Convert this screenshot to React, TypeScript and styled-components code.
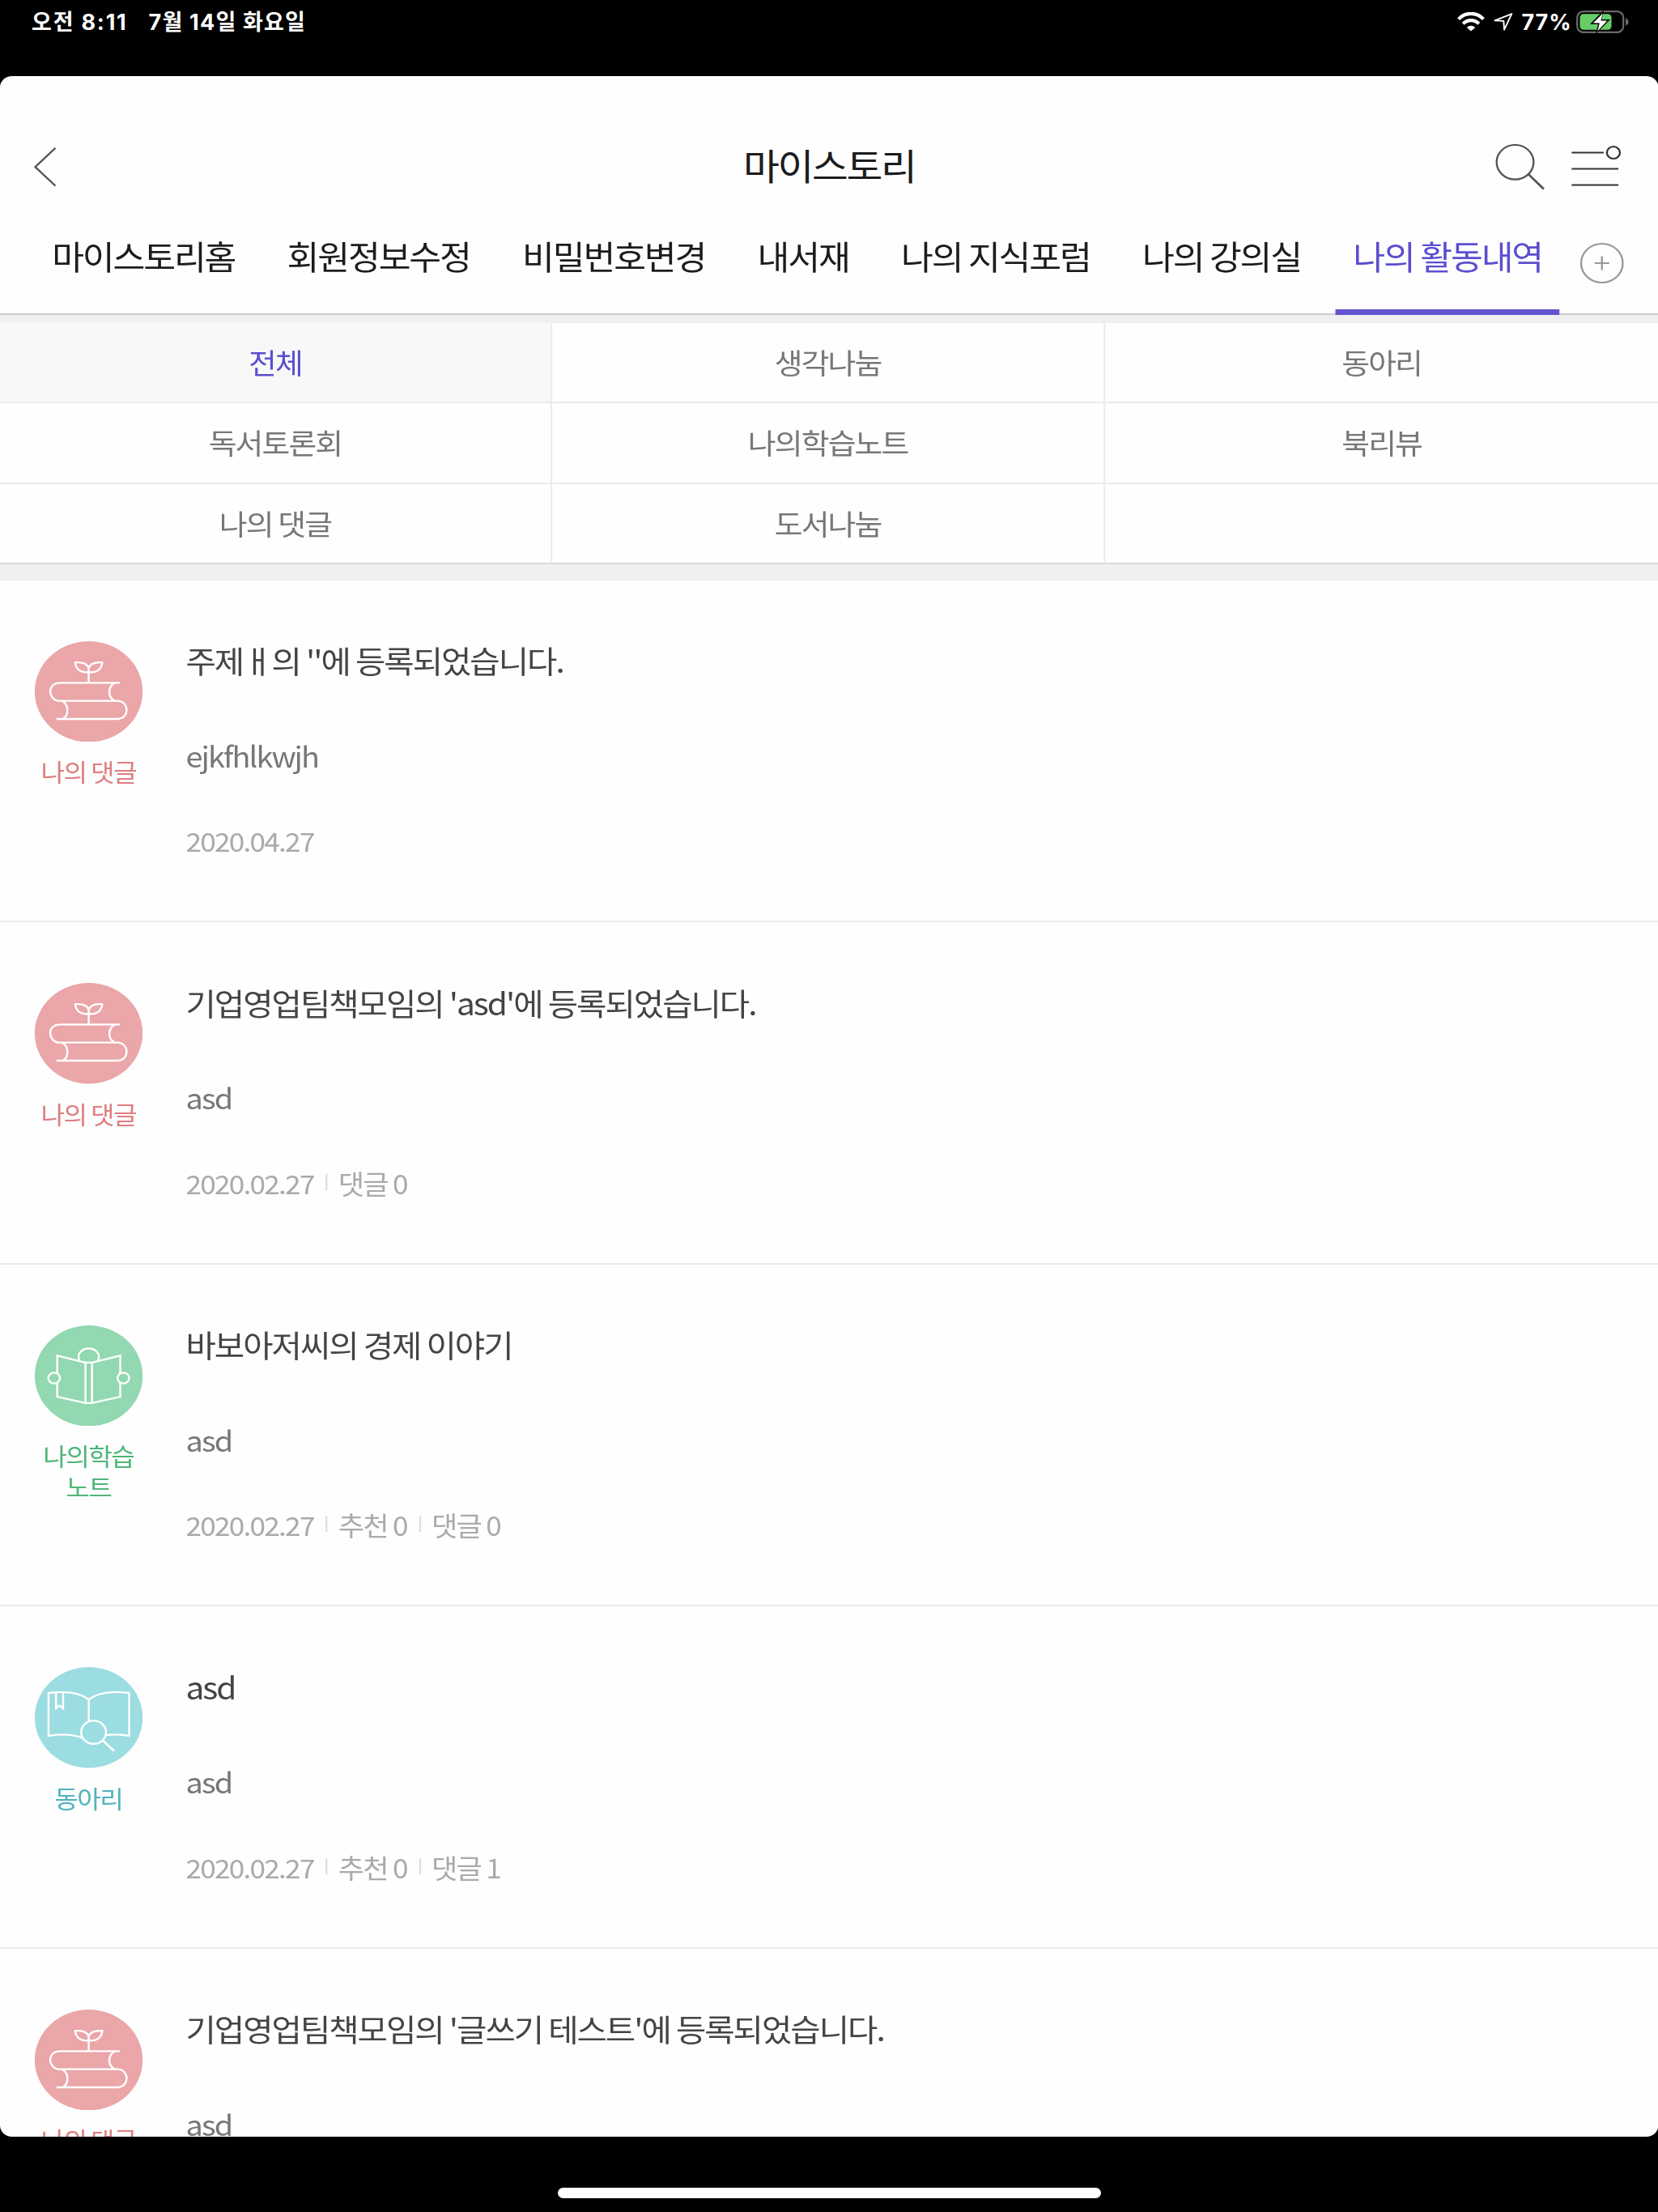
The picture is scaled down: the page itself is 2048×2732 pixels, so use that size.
import React from "react";
import styled, { createGlobalStyle } from "styled-components";

/* The web view is laid out on a narrower canvas and widened to the device. */
const STRETCH = 1.0725;

const GlobalStyle = createGlobalStyle`
  * { box-sizing: border-box; }
  html, body { margin: 0; padding: 0; background: #000; }
  body {
    font-family: "Noto Sans CJK KR", "Noto Sans", sans-serif;
    overflow: hidden;
  }
`;

const Device = styled.div`
  width: 2048px;
  height: 2732px;
  display: flex;
  flex-direction: column;
  background: #000;
  overflow: hidden;
`;

const StatusBar = styled.div`
  height: 93.5px;
  flex: none;
  display: flex;
  justify-content: space-between;
  padding: 6px 35px 0 39px;
  color: #fff;
  font-family: "Inter", "Noto Sans CJK KR", sans-serif;
  font-weight: 700;
  font-size: 27px;
  line-height: 42px;
`;

const StatusGroup = styled.div<{ $gap: number }>`
  display: flex;
  align-items: center;
  gap: ${(p) => p.$gap}px;
  height: 42px;
  white-space: nowrap;
`;

const StatusText = styled.span<{ $spacing: number }>`
  padding-top: 1px;
  letter-spacing: ${(p) => p.$spacing}px;
`;

const Sheet = styled.main`
  width: ${2048 / STRETCH}px;
  height: 2545px;
  flex: none;
  transform: scaleX(${STRETCH});
  transform-origin: 0 0;
  background: #fefefe;
  border-radius: 14px;
  overflow: hidden;
  display: flex;
  flex-direction: column;
  & * { letter-spacing: -0.05em; }
`;

const Header = styled.header`
  height: 165.5px;
  flex: none;
  padding: 64px 41.5px 0 38px;
  display: grid;
  grid-template-columns: 1fr auto 1fr;
  align-items: start;
`;

const Title = styled.h1`
  margin: 15px 0 0;
  padding-left: 4px;
  font-size: 45.5px;
  font-weight: 400;
  line-height: 60px;
  color: #1c1c1c;
`;

const IconButton = styled.button`
  border: 0;
  padding: 0;
  background: none;
  display: block;
  svg { display: block; }
`;

const BackButton = styled(IconButton)`
  margin-top: 22px;
  justify-self: start;
`;

const HeaderActions = styled.div`
  display: flex;
  justify-content: flex-end;
  gap: 30px;
  padding-top: 20px;
`;

const Tabs = styled.nav`
  height: 130px;
  flex: none;
  display: flex;
  padding-left: 39.8px;
  gap: 20px;
  border-bottom: 2px solid #cbcbcb;
`;

const Tab = styled.a<{ $active?: boolean }>`
  height: 130px;
  padding: 26.5px 20px 0;
  font-size: 40.4px;
  line-height: 60px;
  white-space: nowrap;
  color: ${(p) => (p.$active ? "#5b4fcf" : "#1c1c1c")};
  border-bottom: 7px solid ${(p) => (p.$active ? "#6254cf" : "transparent")};
`;

const AddTab = styled(IconButton)`
  margin: 39.5px 0 0 2.3px;
  height: 52px;
`;

const Filters = styled.div`
  flex: none;
  display: grid;
  grid-template-columns: 636px 637px 1fr;
  grid-template-rows: 99.3px 99.5px 97.7px;
  border-top: 10px solid #f0f0f0;
  border-bottom: 2px solid #dadada;
`;

const Filter = styled.div<{ $active?: boolean; $lastRow: boolean; $lastCol: boolean }>`
  display: flex;
  justify-content: center;
  font-size: 35.3px;
  line-height: 96px;
  color: ${(p) => (p.$active ? "#5b4fcf" : "#777")};
  background: ${(p) => (p.$active ? "#f8f8f9" : "transparent")};
  border-right: ${(p) => (p.$lastCol ? 0 : 2)}px solid #ebebeb;
  border-bottom: ${(p) => (p.$lastRow ? 0 : 2)}px solid #ebebeb;
`;

const Band = styled.div`
  height: 19.5px;
  flex: none;
  background: #f0f0f0;
`;

const List = styled.ul`
  list-style: none;
  margin: 0;
  padding: 0;
`;

const Item = styled.li`
  height: 422.5px;
  display: flex;
  border-bottom: 2px solid #ebebeb;
`;

const Kind = styled.div<{ $color: string }>`
  width: 203.6px;
  flex: none;
  padding-top: 75px;
  display: flex;
  flex-direction: column;
  align-items: center;
  font-size: 30px;
  line-height: 37.5px;
  text-align: center;
  white-space: pre-line;
  color: ${(p) => p.$color};
  svg { display: block; margin-bottom: 18px; }
`;

const Content = styled.div`
  padding: 68.5px 0 0 10.4px;
  white-space: nowrap;
`;

const Subject = styled.div`
  font-size: 37.9px;
  line-height: 60px;
  color: #444;
`;

const Body = styled.div`
  margin-top: 57.5px;
  font-size: 35.3px;
  line-height: 60px;
  color: #777;
`;

const Meta = styled.div`
  margin-top: 50.5px;
  display: flex;
  font-size: 32.8px;
  line-height: 50px;
  color: #aaa;
`;

const MetaPart = styled.span`
  & + & {
    display: flex;
  }
  & + &::before {
    content: "";
    width: 2px;
    height: 20px;
    margin: 14px 12.3px 0 13.8px;
    background: #ddd;
  }
`;

const HomeIndicator = styled.div`
  width: 671px;
  height: 13px;
  margin: 63.5px auto 0;
  border-radius: 7px;
  background: #fff;
`;

const Wifi = () => (
  <svg width="34" height="24" viewBox="0 0 34 24" fill="none" stroke="#fff">
    <path d="M1.6 8.6C10 -.4 24 -.4 32.4 8.6" strokeWidth="4.2" />
    <path d="M7.2 14.4C12.6 8.7 21.4 8.7 26.8 14.4" strokeWidth="4.2" />
    <path d="M11.8 18.9C14.8 16 19.2 16 22.2 18.9L17 23.6Z" fill="#fff" stroke="none" />
  </svg>
);

const Location = () => (
  <svg width="24" height="22" viewBox="0 0 24 22" fill="none" stroke="#fff" strokeWidth="1.9" strokeLinejoin="round">
    <path d="M22.3 1.2L1.4 9.3L12.3 9.9L13.1 20.6Z" />
  </svg>
);

const BatterySvg = styled.svg`
  margin-left: -5px;
`;

const Battery = () => (
  <BatterySvg width="66" height="30" viewBox="0 0 66 30">
    <rect x="1.2" y="2.2" width="57" height="25.6" rx="7.5" fill="none" stroke="#6a6a6a" strokeWidth="2.2" />
    <path d="M61 10.5C65.8 11.5 65.8 18.5 61 19.5Z" fill="#6a6a6a" />
    <rect x="4.5" y="5.3" width="39" height="19.4" rx="4.5" fill="#67ce67" />
    <path d="M34 .5L17 18H27L24 30L42 12H31.500Z" fill="#000" />
    <path d="M32.800 4.500L20.800 16.500H28.800L26.300 26.500L38.300 13.500H30.300Z" fill="#fff" />
  </BatterySvg>
);

const Back = () => (
  <svg width="30" height="60" viewBox="0 0 30 60" fill="none" stroke="#555" strokeWidth="2.3">
    <path d="M25.8 2.8L2.6 26.2L25.8 49.5" />
  </svg>
);

const Search = () => (
  <svg width="58" height="60" viewBox="0 0 58 60" fill="none" stroke="#555" strokeWidth="2.2">
    <circle cx="23" cy="22.3" r="21.3" />
    <path d="M38.3 37.2L56 55.5" strokeWidth="2.6" />
  </svg>
);

const Menu = () => (
  <svg width="58" height="60" viewBox="0 0 58 60" fill="none" stroke="#333" strokeWidth="2.2">
    <path d="M0 10.5H37M0 30.5H54M0 50.5H54" />
    <circle cx="48.2" cy="10.5" r="7.5" />
  </svg>
);

const Plus = () => (
  <svg width="52" height="52" viewBox="0 0 52 52" fill="none" stroke="#999" strokeWidth="2.2">
    <circle cx="26" cy="26" r="24" />
    <path d="M26 17.5V34.5M17.5 26H34.5" />
  </svg>
);

const BooksIcon = () => (
  <svg width="124.4" height="124.4" viewBox="0 0 124.4 124.4" fill="none" stroke="#fff" strokeWidth="2.3">
    <circle cx="62.2" cy="62.2" r="62.2" fill="#eaa6a8" stroke="none" />
    <path d="M62.2 51V32.5M62.2 38C53 39.5 47.5 35 46.6 26.2C55.5 25.4 60.8 27.6 62.2 33.5C63.6 27.6 68.9 25.4 77.8 26.2C76.9 35 71.4 39.5 62.2 38" strokeLinejoin="round" />
    <path d="M98 51.3H29.5C14.5 51.3 14.5 70 26.5 73.7H96C109.5 75 109 95.5 95.5 96H25" />
    <path d="M92.5 51.3C84 56 83.5 69 92.5 73.7M31.5 73.7C39.5 78 39.5 91.5 32.5 96" />
  </svg>
);

const ReaderIcon = () => (
  <svg width="124.4" height="124.4" viewBox="0 0 124.4 124.4" fill="none" stroke="#fff" strokeWidth="2.3">
    <circle cx="62.2" cy="62.2" r="62.2" fill="#92d8b0" stroke="none" />
    <path d="M51.3 43C48.5 35 54 28.5 62.2 28.5C70.4 28.5 75.9 35 73.1 43" />
    <path d="M58.4 45.8L25.9 37.3V88L58.4 95.8ZM66 45.8L98.5 37.3V88L66 95.8ZM58.4 45.8H66M58.4 95.8H66" />
    <circle cx="22.3" cy="65" r="6.7" fill="#92d8b0" />
    <circle cx="102.1" cy="65" r="6.7" fill="#92d8b0" />
  </svg>
);

const ClubIcon = () => (
  <svg width="124.4" height="124.4" viewBox="0 0 124.4 124.4" fill="none" stroke="#fff" strokeWidth="2.3">
    <circle cx="62.2" cy="62.2" r="62.2" fill="#9bdde1" stroke="none" />
    <path d="M62.2 67V40C51 31 34 29.5 15.9 32V84.8C31 82.3 45 82.8 56 88M62.2 40C73.4 31 90.7 29.5 108.8 32V84.8C99 83.2 91 83 82 84" />
    <path d="M24.5 31.5V51L28.5 47.5L32.7 51V31.5" />
    <circle cx="67.8" cy="80.5" r="14.3" />
    <path d="M78.2 90.5L91.5 103.7" strokeWidth="2.6" />
  </svg>
);

const kinds = {
  comment: { label: "나의 댓글", color: "#de7e80", Icon: BooksIcon },
  note: { label: "나의학습\n노트", color: "#4fb678", Icon: ReaderIcon },
  club: { label: "동아리", color: "#4fb3bd", Icon: ClubIcon },
};

const items: { kind: keyof typeof kinds; subject: string; body: string; meta: string[] }[] = [
  { kind: "comment", subject: "주제ㅐ의 ''에 등록되었습니다.", body: "ejkfhlkwjh", meta: ["2020.04.27"] },
  { kind: "comment", subject: "기업영업팀책모임의 'asd'에 등록되었습니다.", body: "asd", meta: ["2020.02.27", "댓글 0"] },
  { kind: "note", subject: "바보아저씨의 경제 이야기", body: "asd", meta: ["2020.02.27", "추천 0", "댓글 0"] },
  { kind: "club", subject: "asd", body: "asd", meta: ["2020.02.27", "추천 0", "댓글 1"] },
  { kind: "comment", subject: "기업영업팀책모임의 '글쓰기 테스트'에 등록되었습니다.", body: "asd", meta: [] },
];

const tabs = ["마이스토리홈", "회원정보수정", "비밀번호변경", "내서재", "나의 지식포럼", "나의 강의실", "나의 활동내역"];
const filters = ["전체", "생각나눔", "동아리", "독서토론회", "나의학습노트", "북리뷰", "나의 댓글", "도서나눔", ""];

export default function App() {
  return (
    <Device>
      <GlobalStyle />
      <StatusBar>
        <StatusGroup $gap={26}>
          <StatusText $spacing={1.8}>오전 8:11</StatusText>
          <StatusText $spacing={1.2}>7월 14일 화요일</StatusText>
        </StatusGroup>
        <StatusGroup $gap={10.5}>
          <Wifi />
          <Location />
          <StatusText $spacing={0.9}>77%</StatusText>
          <Battery />
        </StatusGroup>
      </StatusBar>
      <Sheet>
        <Header>
          <BackButton aria-label="뒤로"><Back /></BackButton>
          <Title>마이스토리</Title>
          <HeaderActions>
            <IconButton aria-label="검색"><Search /></IconButton>
            <IconButton aria-label="메뉴"><Menu /></IconButton>
          </HeaderActions>
        </Header>
        <Tabs>
          {tabs.map((t, i) => (
            <Tab key={t} $active={i === tabs.length - 1}>{t}</Tab>
          ))}
          <AddTab aria-label="추가"><Plus /></AddTab>
        </Tabs>
        <Filters>
          {filters.map((f, i) => (
            <Filter key={i} $active={i === 0} $lastRow={i > 5} $lastCol={i % 3 === 2}>{f}</Filter>
          ))}
        </Filters>
        <Band />
        <List>
          {items.map((it, i) => {
            const { label, color, Icon } = kinds[it.kind];
            return (
              <Item key={i}>
                <Kind $color={color}>
                  <Icon />
                  {label}
                </Kind>
                <Content>
                  <Subject>{it.subject}</Subject>
                  <Body>{it.body}</Body>
                  <Meta>
                    {it.meta.map((m) => (
                      <MetaPart key={m}>{m}</MetaPart>
                    ))}
                  </Meta>
                </Content>
              </Item>
            );
          })}
        </List>
      </Sheet>
      <HomeIndicator />
    </Device>
  );
}
